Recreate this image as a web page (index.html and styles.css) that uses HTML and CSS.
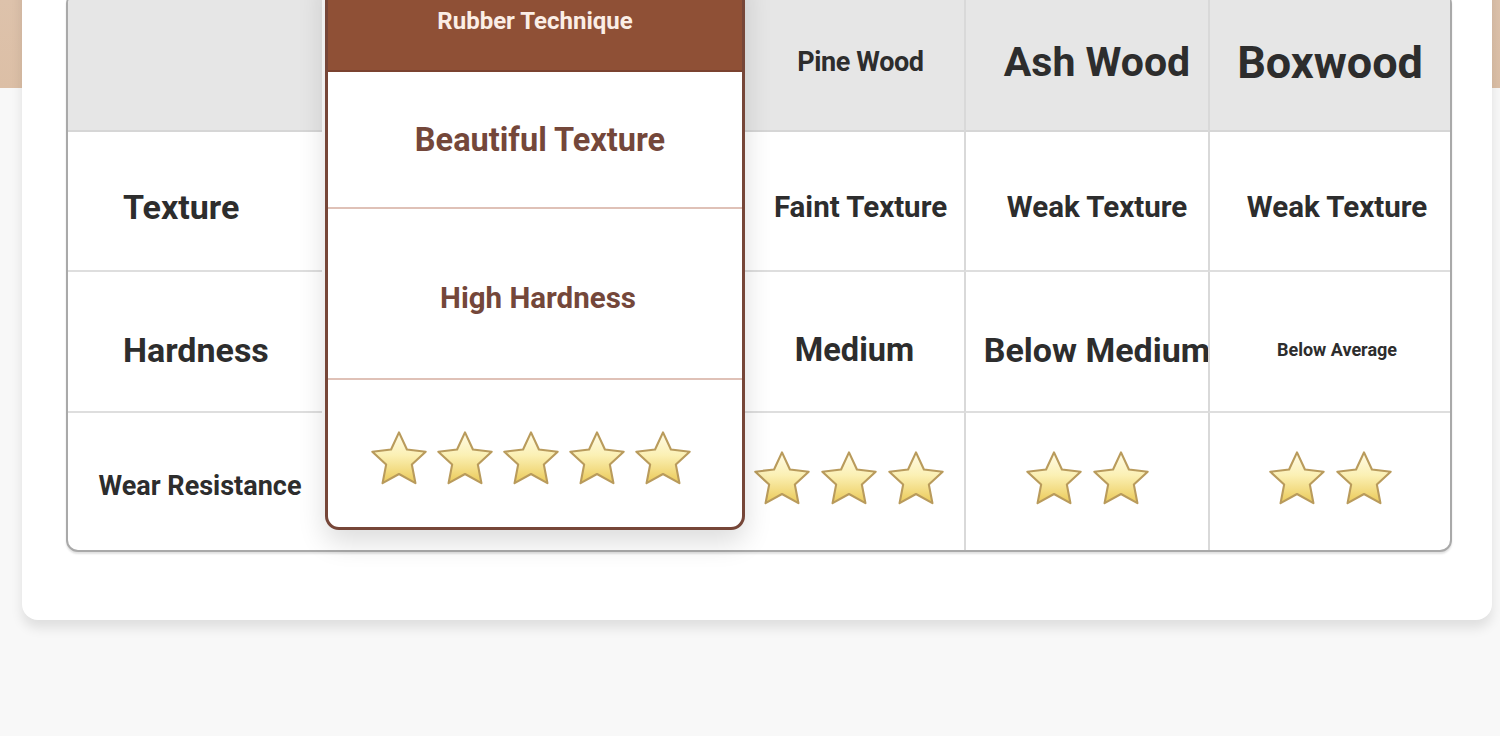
FILE: index.html
```html
<!DOCTYPE html>
<html lang="en">
<head>
    <meta charset="UTF-8">
    <meta name="viewport" content="width=device-width, initial-scale=1.0">
    <title>Rubber Technique Comparison</title>
    <link rel="stylesheet" href="styles.css">
</head>
<body>
    <svg class="defs" aria-hidden="true">
        <defs>
            <linearGradient id="starFill" x1="0" y1="0" x2="0" y2="1">
                <stop offset="0" stop-color="#fffce8"/>
                <stop offset="0.45" stop-color="#fbf0b4"/>
                <stop offset="1" stop-color="#ebca58"/>
            </linearGradient>
            <symbol id="star" viewBox="0 0 60 58">
                <path d="M30 2 L38.2 19.7 L57.6 22 L43.3 35.3 L47 54.5 L30 45 L13 54.5 L16.7 35.3 L2.4 22 L21.8 19.7 Z"
                      fill="url(#starFill)" stroke="#b99b5c" stroke-width="2.2" stroke-linejoin="round"/>
            </symbol>
        </defs>
    </svg>

    <div class="page">
        <div class="card">
            <div class="compare">
                <!-- highlighted column -->
                <div class="feature">
                    <div class="feature-head">Rubber Technique</div>
                    <div class="feature-row texture">Beautiful Texture</div>
                    <div class="feature-row hardness">High Hardness</div>
                    <div class="feature-row wear">
                        <div class="stars">
                            <svg class="star"><use href="#star"/></svg>
                            <svg class="star"><use href="#star"/></svg>
                            <svg class="star"><use href="#star"/></svg>
                            <svg class="star"><use href="#star"/></svg>
                            <svg class="star"><use href="#star"/></svg>
                        </div>
                    </div>
                </div>

                <div class="cell head first"></div>
                <div class="cell head pine"><span class="t-pine">Pine Wood</span></div>
                <div class="cell head sep ash"><span class="t-ash">Ash Wood</span></div>
                <div class="cell head sep"><span class="t-box">Boxwood</span></div>

                <div class="cell first row1"><span class="t-label">Texture</span></div>
                <div class="cell row1 pine"><span class="t-faint">Faint Texture</span></div>
                <div class="cell sep ash row1"><span class="t-weak">Weak Texture</span></div>
                <div class="cell sep row1 box"><span class="t-weak">Weak Texture</span></div>

                <div class="cell first row2"><span class="t-label">Hardness</span></div>
                <div class="cell row2"><span class="t-medium">Medium</span></div>
                <div class="cell sep ash row2"><span class="t-below">Below Medium</span></div>
                <div class="cell sep row2 box"><span class="t-avg">Below Average</span></div>

                <div class="cell first center last"><span class="t-wear">Wear Resistance</span></div>
                <div class="cell last pine-stars">
                    <div class="stars">
                        <svg class="star"><use href="#star"/></svg>
                        <svg class="star"><use href="#star"/></svg>
                        <svg class="star"><use href="#star"/></svg>
                    </div>
                </div>
                <div class="cell sep last">
                    <div class="stars">
                        <svg class="star"><use href="#star"/></svg>
                        <svg class="star"><use href="#star"/></svg>
                    </div>
                </div>
                <div class="cell sep last">
                    <div class="stars">
                        <svg class="star"><use href="#star"/></svg>
                        <svg class="star"><use href="#star"/></svg>
                    </div>
                </div>
            </div>
        </div>
    </div>
</body>
</html>
```

FILE: styles.css
```css
body {
    margin: 0;
    font-family: Roboto, "Liberation Sans", Arial, sans-serif;
    font-weight: 700;
    color: #2d2d2d;
    background: linear-gradient(#ddc2ab 0, #dcbfa6 88px, #f8f8f8 88px);
    height: 736px;
    overflow: hidden;
}

.defs {
    display: block;
    width: 0;
    height: 0;
    overflow: hidden;
}

.page {
    padding: 0 8px 0 22px;
}

.card {
    margin-top: -40px;
    padding: 32px 40px 68px 44px;
    background: #fff;
    border-radius: 0 0 16px 16px;
    box-shadow: 0 8px 12px rgba(0, 0, 0, 0.1);
}

.compare {
    display: grid;
    grid-template-columns: 254px 423px 219px 244px 1fr;
    grid-template-rows: 138px 140px 141px 137px;
    border: 2px solid #a9a9a9;
    border-radius: 12px;
    box-shadow: 0 2px 2px rgba(0, 0, 0, 0.12);
    background: #fff;
}

.cell {
    display: flex;
    align-items: center;
    justify-content: center;
    border-bottom: 2px solid #dedede;
    white-space: nowrap;
}

.cell.head {
    background: #e6e6e6;
    border-bottom-color: #d6d6d6;
}

.cell.head.first {
    border-top-left-radius: 10px;
}

.cell.sep {
    border-left: 2px solid #d9d9d9;
}

.cell.first {
    justify-content: flex-start;
    padding-left: 55px;
}

.cell.first.center {
    justify-content: center;
    padding: 8px 0 0 10px;
}

.cell.last {
    border-bottom: none;
}

.cell.row1 {
    padding-top: 12px;
}

.cell.row2 {
    padding-top: 16px;
}

.cell.ash {
    padding-left: 20px;
}

.cell.box {
    padding-left: 14px;
}

.cell.pine {
    padding-left: 12px;
}

.cell.pine-stars {
    padding-right: 12px;
}

.cell.last .stars {
    margin-top: -6px;
}

.t-pine { font-size: 27px; letter-spacing: -0.4px; }
.t-ash { font-size: 41px; }
.t-box { font-size: 45px; }
.t-label { font-size: 34px; }
.t-wear { font-size: 27px; }
.t-faint { font-size: 29.5px; }
.t-weak { font-size: 29.5px; }
.t-medium { font-size: 32.5px; }
.t-below { font-size: 34px; }
.t-avg { font-size: 18px; }

/* highlighted column */
.feature {
    grid-column: 2;
    grid-row: 1 / span 4;
    margin: -26px 0 20px 3px;
    display: flex;
    flex-direction: column;
    border: 3px solid #764638;
    border-radius: 14px;
    background: #fff;
    box-shadow: 0 12px 28px rgba(0, 0, 0, 0.14);
    color: #74473a;
    position: relative;
    z-index: 1;
}

.feature-head {
    height: 101px;
    display: flex;
    align-items: center;
    justify-content: center;
    background: #8f5036;
    color: #fbeee6;
    font-size: 24px;
    border-radius: 10px 10px 0 0;
    border-bottom: 2px solid #7b4330;
    box-sizing: border-box;
}

.feature-row {
    display: flex;
    align-items: center;
    justify-content: center;
    border-bottom: 2px solid #dfc1b7;
}

.feature-row.texture {
    height: 137px;
    box-sizing: border-box;
    font-size: 32.5px;
    padding-left: 10px;
}

.feature-row.hardness {
    height: 171px;
    box-sizing: border-box;
    font-size: 29.5px;
    padding: 8px 0 0 6px;
}

.feature-row.wear {
    flex: 1;
    border-bottom: none;
    padding: 10px 8px 0 0;
}

.stars {
    display: flex;
    gap: 9px;
}

.feature .stars {
    gap: 8px;
}

.star {
    width: 58px;
    height: 57px;
}
```
